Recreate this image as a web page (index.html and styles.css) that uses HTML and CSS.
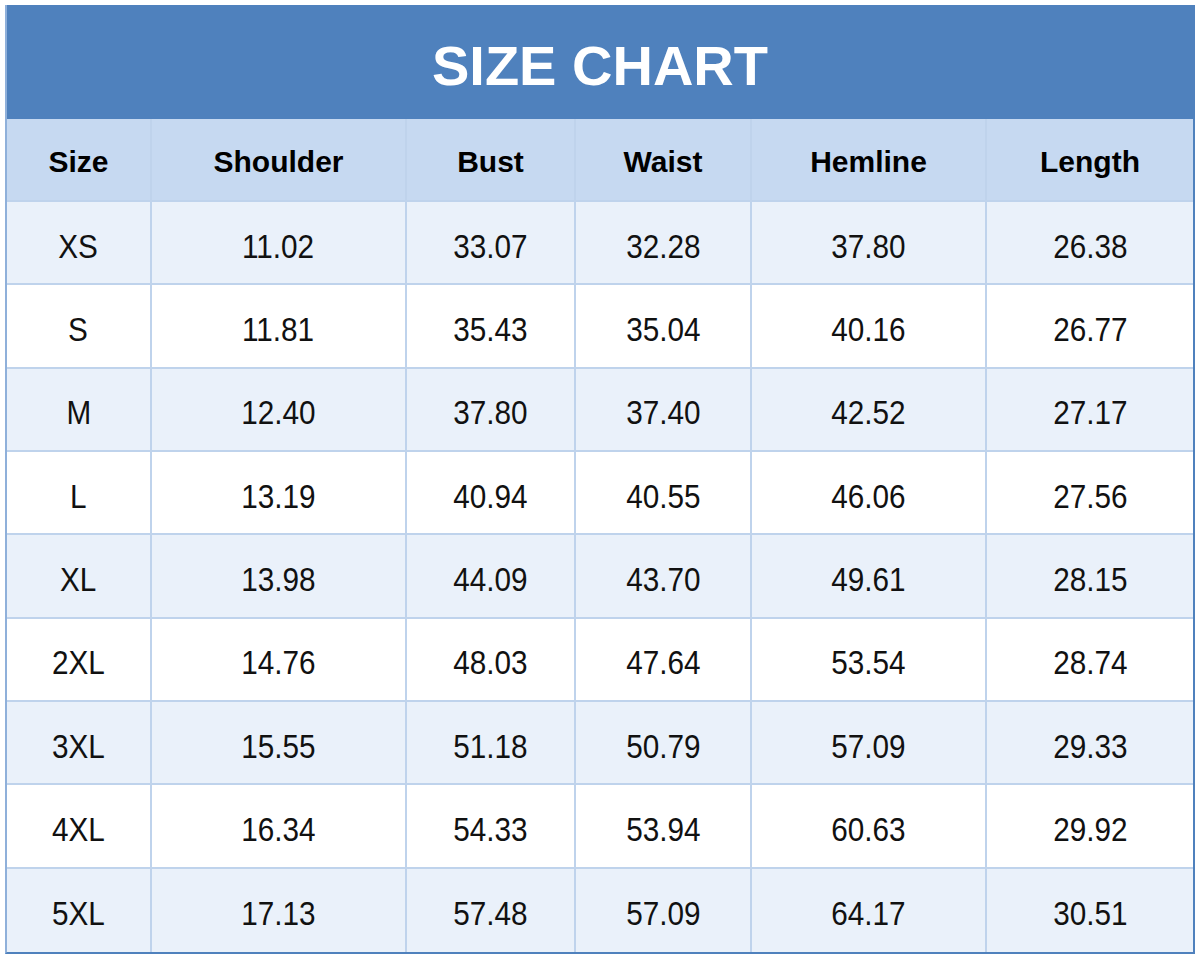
FILE: index.html
```html
<!DOCTYPE html>
<html lang="en">
<head>
<meta charset="utf-8">
<title>Size Chart</title>
<link rel="stylesheet" href="styles.css">
</head>
<body>
<div class="chart">
  <div class="title">SIZE CHART</div>
  <div class="grid">
    <div class="cell head">Size</div><div class="cell head">Shoulder</div><div class="cell head">Bust</div><div class="cell head">Waist</div><div class="cell head">Hemline</div><div class="cell head last">Length</div>

    <div class="cell alt"><span>XS</span></div><div class="cell alt"><span>11.02</span></div><div class="cell alt"><span>33.07</span></div><div class="cell alt"><span>32.28</span></div><div class="cell alt"><span>37.80</span></div><div class="cell alt last"><span>26.38</span></div>
    <div class="cell"><span>S</span></div><div class="cell"><span>11.81</span></div><div class="cell"><span>35.43</span></div><div class="cell"><span>35.04</span></div><div class="cell"><span>40.16</span></div><div class="cell last"><span>26.77</span></div>
    <div class="cell alt"><span>M</span></div><div class="cell alt"><span>12.40</span></div><div class="cell alt"><span>37.80</span></div><div class="cell alt"><span>37.40</span></div><div class="cell alt"><span>42.52</span></div><div class="cell alt last"><span>27.17</span></div>
    <div class="cell"><span>L</span></div><div class="cell"><span>13.19</span></div><div class="cell"><span>40.94</span></div><div class="cell"><span>40.55</span></div><div class="cell"><span>46.06</span></div><div class="cell last"><span>27.56</span></div>
    <div class="cell alt"><span>XL</span></div><div class="cell alt"><span>13.98</span></div><div class="cell alt"><span>44.09</span></div><div class="cell alt"><span>43.70</span></div><div class="cell alt"><span>49.61</span></div><div class="cell alt last"><span>28.15</span></div>
    <div class="cell"><span>2XL</span></div><div class="cell"><span>14.76</span></div><div class="cell"><span>48.03</span></div><div class="cell"><span>47.64</span></div><div class="cell"><span>53.54</span></div><div class="cell last"><span>28.74</span></div>
    <div class="cell alt"><span>3XL</span></div><div class="cell alt"><span>15.55</span></div><div class="cell alt"><span>51.18</span></div><div class="cell alt"><span>50.79</span></div><div class="cell alt"><span>57.09</span></div><div class="cell alt last"><span>29.33</span></div>
    <div class="cell"><span>4XL</span></div><div class="cell"><span>16.34</span></div><div class="cell"><span>54.33</span></div><div class="cell"><span>53.94</span></div><div class="cell"><span>60.63</span></div><div class="cell last"><span>29.92</span></div>
    <div class="cell alt bottom"><span>5XL</span></div><div class="cell alt bottom"><span>17.13</span></div><div class="cell alt bottom"><span>57.48</span></div><div class="cell alt bottom"><span>57.09</span></div><div class="cell alt bottom"><span>64.17</span></div><div class="cell alt bottom last"><span>30.51</span></div>
  </div>
</div>
</body>
</html>
```

FILE: styles.css
```css
html, body {
  margin: 0;
  padding: 0;
  background: #ffffff;
}

body {
  padding: 5px;
  font-family: "Liberation Sans", Arial, sans-serif;
}

.chart {
  width: 1190px;
  height: 949px;
  box-sizing: border-box;
  border-left: 2px solid #8fb0da;
  border-right: 2px solid #4f81bd;
  border-bottom: 2px solid #4f81bd;
  display: flex;
  flex-direction: column;
}

.title {
  height: 114px;
  flex: 0 0 114px;
  background: #4f81bd;
  color: #ffffff;
  font-weight: bold;
  font-size: 56px;
  display: flex;
  align-items: center;
  justify-content: center;
  padding-top: 7px;
  box-sizing: border-box;
}

.grid {
  flex: 1;
  display: grid;
  grid-template-columns: 145px 255px 169px 176px 235px 1fr;
  grid-template-rows: 83px repeat(9, 1fr);
}

.cell {
  display: flex;
  align-items: center;
  justify-content: center;
  border-right: 2px solid #bfd3ec;
  border-bottom: 2px solid #bfd3ec;
  font-size: 33px;
  color: #111111;
  background: #ffffff;
  padding-top: 8px;
  box-sizing: border-box;
}

.cell span {
  display: inline-block;
  transform: scaleX(0.9);
}

.cell.last {
  border-right: none;
}

.cell.bottom {
  border-bottom: none;
}

.cell.head {
  background: #c6d9f1;
  font-weight: bold;
  font-size: 30px;
  color: #000000;
  padding-top: 5px;
}

.cell.alt {
  background: #eaf1fa;
}
```
